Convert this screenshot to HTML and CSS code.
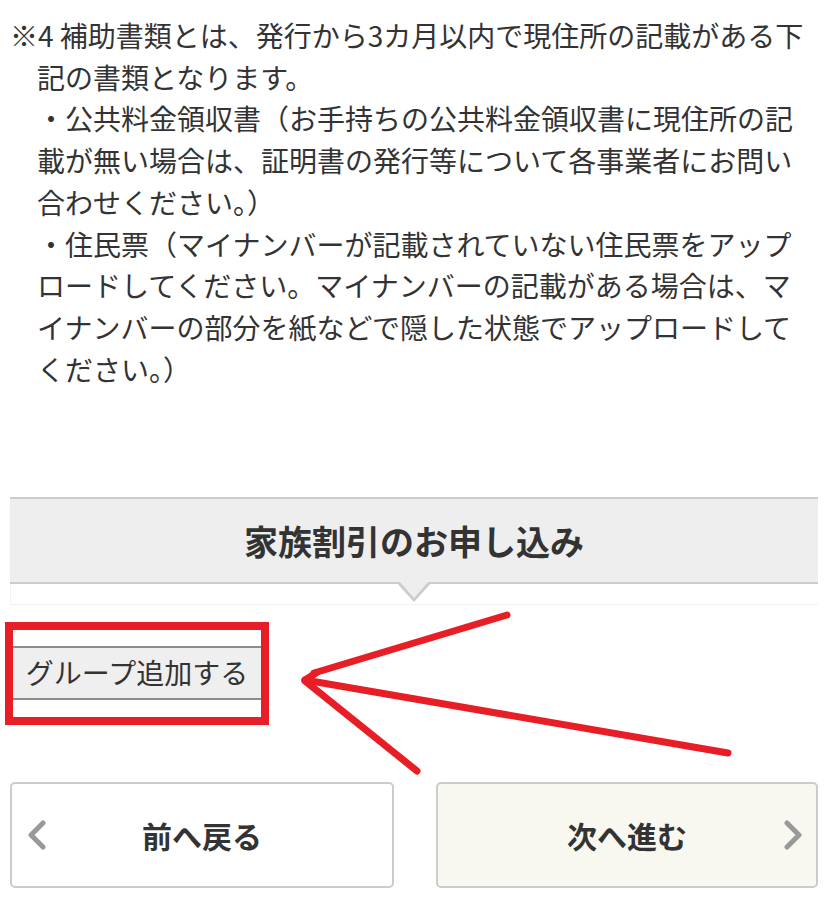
FILE: index.html
```html
<!DOCTYPE html>
<html lang="ja">
<head>
<meta charset="utf-8">
<title>家族割引のお申し込み</title>
<link rel="stylesheet" href="styles.css">
</head>
<body>
<div class="page">
  <p class="note">※4 補助書類とは、発行から3カ月以内で現住所の記載がある下記の書類となります。<br>・公共料金領収書（お手持ちの公共料金領収書に現住所の記載が無い場合は、証明書の発行等について各事業者にお問い合わせください。）<br>・住民票（マイナンバーが記載されていない住民票をアップロードしてください。マイナンバーの記載がある場合は、マイナンバーの部分を紙などで隠した状態でアップロードしてください。）</p>

  <section class="family">
    <h2 class="family-title">家族割引のお申し込み</h2>
    <div class="family-body"></div>
  </section>

  <div class="group-row">
    <button class="group-btn" type="button">グループ追加する</button>
  </div>

  <nav class="pager">
    <a class="pager-btn pager-prev" href="#">
      <svg class="chev chev-left" width="20" height="30" viewBox="0 0 20 30"><polyline points="16,3 4,15 16,27" fill="none" stroke="#999" stroke-width="5" stroke-linejoin="round" stroke-linecap="round"/></svg>
      前へ戻る
    </a>
    <a class="pager-btn pager-next" href="#">
      次へ進む
      <svg class="chev chev-right" width="20" height="30" viewBox="0 0 20 30"><polyline points="4,3 16,15 4,27" fill="none" stroke="#999" stroke-width="5" stroke-linejoin="round" stroke-linecap="round"/></svg>
    </a>
  </nav>

  <svg class="annotation" width="826" height="903" viewBox="0 0 826 903">
    <rect x="9" y="626" width="256" height="95" fill="none" stroke="#e81e27" stroke-width="8"/>
    <g stroke="#e81e27" stroke-width="7" stroke-linecap="round" fill="none">
      <line x1="507" y1="615" x2="314" y2="673"/>
      <line x1="305" y1="680" x2="728" y2="753"/>
      <line x1="305" y1="681" x2="417" y2="771"/>
      <line x1="305" y1="680" x2="316" y2="673"/>
    </g>
  </svg>
</div>
</body>
</html>
```

FILE: styles.css
```css
* {
  box-sizing: border-box;
}

html, body {
  margin: 0;
  padding: 0;
  background: #ffffff;
}

body {
  font-family: "Noto Sans CJK JP", "Noto Sans", sans-serif;
  color: #333333;
}

.page {
  position: relative;
  width: 826px;
  height: 903px;
  overflow: hidden;
}

.note {
  margin: 0;
  padding: 15px 10px 0 37px;
  text-indent: -27px;
  font-size: 28px;
  line-height: 41.7px;
  color: #333333;
}

.family {
  position: relative;
  margin: 107px 8px 0 10px;
}

.family-title {
  margin: 0;
  height: 87px;
  display: flex;
  align-items: center;
  justify-content: center;
  background: #eeeeee;
  border-top: 2px solid #cccccc;
  border-bottom: 2px solid #cccccc;
  font-size: 34px;
  font-weight: bold;
  color: #333333;
  position: relative;
}

.family-title::before,
.family-title::after {
  content: "";
  position: absolute;
  left: 50%;
  width: 0;
  height: 0;
  border-style: solid;
}

.family-title::before {
  top: 100%;
  margin-left: -18px;
  border-width: 20px 18px 0 18px;
  border-color: #cccccc transparent transparent transparent;
}

.family-title::after {
  top: 100%;
  margin-left: -15px;
  margin-top: -1px;
  border-width: 17px 15px 0 15px;
  border-color: #eeeeee transparent transparent transparent;
}

.family-body {
  height: 21px;
  border-left: 1px solid #f3f3f3;
  border-bottom: 1px solid #f0f0f0;
}

.group-row {
  padding: 41px 0 0 10px;
}

.group-btn {
  display: block;
  width: 254px;
  height: 54px;
  margin: 0;
  padding: 0 0 2px;
  background: #efefef;
  border: none;
  border-top: 2px solid #8c8c8c;
  border-bottom: 2px solid #8c8c8c;
  font-family: "Noto Sans CJK JP", "Noto Sans", sans-serif;
  font-size: 28px;
  color: #333333;
  text-align: center;
}

.pager {
  display: grid;
  grid-template-columns: 384px 382px;
  column-gap: 42px;
  margin: 82px 8px 0 10px;
}

.pager-btn {
  position: relative;
  display: flex;
  align-items: center;
  justify-content: center;
  height: 106px;
  border: 2px solid #cccccc;
  border-radius: 5px;
  background: #ffffff;
  font-size: 30px;
  font-weight: bold;
  color: #333333;
  text-decoration: none;
}

.pager-next {
  background: #f8f8f0;
}

.chev {
  position: absolute;
  top: 50%;
  margin-top: -15px;
}

.chev-left {
  left: 15px;
}

.chev-right {
  right: 13px;
}

.annotation {
  position: absolute;
  top: 0;
  left: 0;
  pointer-events: none;
}
```
